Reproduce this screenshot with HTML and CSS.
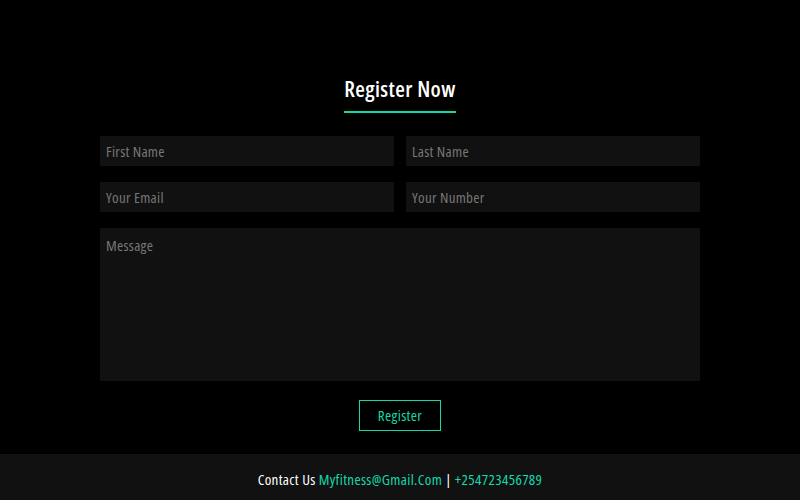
FILE: index.html
```html
<!DOCTYPE html>
<html>
<head>
<meta charset="utf-8">
<link rel="stylesheet" href="styles.css">
</head>
<body>
<main class="register">
  <h2 class="title">Register Now</h2>
  <form class="form">
    <div class="row">
      <input class="field" type="text" placeholder="First Name">
      <input class="field" type="text" placeholder="Last Name">
    </div>
    <div class="row">
      <input class="field" type="email" placeholder="Your Email">
      <input class="field" type="text" placeholder="Your Number">
    </div>
    <textarea class="message" placeholder="Message"></textarea>
    <button class="btn" type="button">Register</button>
  </form>
</main>
<footer class="footer">
  <p>Contact Us <span class="accent">Myfitness@Gmail.Com</span> | <span class="accent">+254723456789</span></p>
</footer>
</body>
</html>
```
FILE: styles.css
```css
* { box-sizing: border-box; }
html, body { margin: 0; padding: 0; }
body {
  background: #000;
  color: #fff;
  font-family: "Open Sans", "Noto Sans", sans-serif;
  font-stretch: condensed;
  width: 800px;
  height: 500px;
  display: flex;
  flex-direction: column;
}
.register {
  flex: 1;
  display: flex;
  flex-direction: column;
  align-items: center;
  padding-top: 74px;
}
.title {
  margin: 0;
  font-size: 22px;
  font-weight: 600;
  line-height: 28px;
  letter-spacing: 0.4px;
  padding-bottom: 9px;
  border-bottom: 2px solid #14d9aa;
}
.form {
  width: 600px;
  margin-top: 23px;
  display: flex;
  flex-direction: column;
  align-items: center;
}
.row {
  width: 100%;
  display: flex;
  gap: 12px;
  margin-bottom: 16px;
}
.field, .message {
  background: #111;
  border: none;
  outline: none;
  color: #ccc;
  font-family: inherit;
  font-stretch: inherit;
  font-size: 15px;
  letter-spacing: 0.3px;
  padding: 0 6px;
}
.field { flex: 1; height: 30px; }
.message {
  width: 100%;
  height: 153px;
  padding-top: 7px;
  resize: none;
  display: block;
}
.field::placeholder, .message::placeholder { color: #777; }
.btn {
  margin-top: 19px;
  width: 82px;
  height: 31px;
  background: transparent;
  border: 1px solid #14d9aa;
  color: #14d9aa;
  font-family: inherit;
  font-stretch: inherit;
  font-size: 15px;
  letter-spacing: 0.35px;
  padding: 0 0 2px;
}
.footer {
  background: #111;
  height: 46px;
  display: flex;
  align-items: center;
  justify-content: center;
}
.footer p {
  margin: 0;
  padding-top: 3px;
  font-size: 15px;
  letter-spacing: 0.35px;
}
.accent { color: #14d9aa; }
```
